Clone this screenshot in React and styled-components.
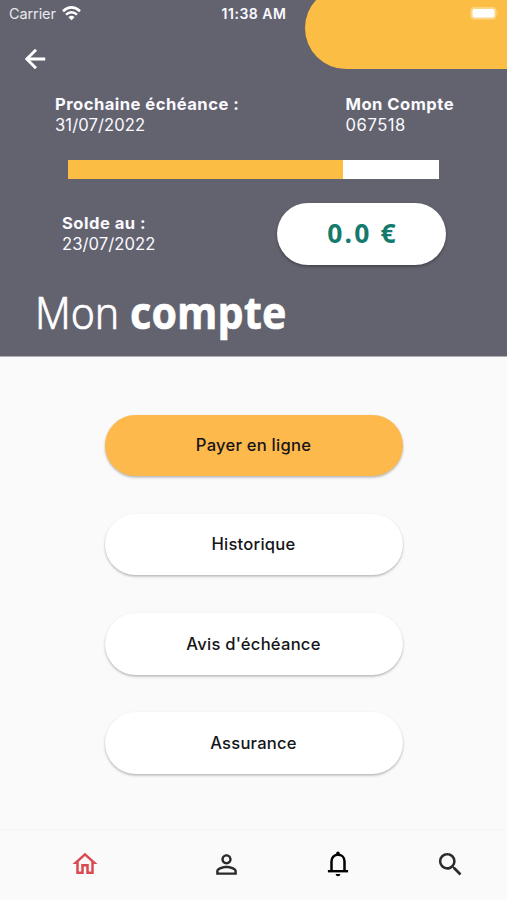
import styled, { createGlobalStyle } from 'styled-components';
import {
  MdArrowBack,
  MdOutlineHome,
  MdPersonOutline,
  MdSearch,
} from 'react-icons/md';

const GlobalStyle = createGlobalStyle`
  * {
    box-sizing: border-box;
  }
  body {
    margin: 0;
    background-color: #fafafa;
    font-family: Inter, 'Liberation Sans', sans-serif;
  }
  button {
    padding: 0;
    border: none;
    font-family: inherit;
    cursor: pointer;
  }
`;

const StyledScreen = styled.div`
  display: flex;
  flex-direction: column;
  width: 507px;
  height: 900px;
  overflow: hidden;
`;

const StyledHeader = styled.header`
  position: relative;
  display: flex;
  flex-direction: column;
  height: 357px;
  color: #fbfaff;
  background-color: #63636f;
  border-bottom: 1px solid #b0b0b6;
  overflow: hidden;
`;

const StyledBlob = styled.div`
  position: absolute;
  top: -13px;
  right: -60px;
  width: 262.5px;
  height: 82px;
  border-radius: 41px;
  background-color: #fbbd43;
`;

const StyledStatusBar = styled.div`
  position: relative;
  display: grid;
  grid-template-columns: 1fr auto 1fr;
  align-items: center;
  height: 27px;
  padding: 0 8px 0 9px;
  font-size: 14.5px;
`;

const StyledCarrier = styled.div`
  display: flex;
  align-items: center;
  gap: 6px;
  color: #e9e8ee;
  letter-spacing: -0.1px;
`;

const StyledTime = styled.div`
  font-weight: 600;
  font-size: 14px;
  letter-spacing: 0.5px;
`;

const StyledBattery = styled.svg`
  justify-self: end;
`;

const StyledBackButton = styled.button`
  display: flex;
  align-items: center;
  width: 32px;
  height: 32px;
  margin: 16px 0 0 20px;
  color: #fff;
  background: none;
  path:last-child {
    stroke: currentColor;
    stroke-width: 0.4px;
    stroke-linejoin: round;
  }
`;

const StyledInfoRow = styled.div`
  display: flex;
  justify-content: space-between;
  margin: 18.5px 53px 0 55px;
`;

const StyledInfo = styled.div`
  font-size: 16.6px;
  line-height: 21px;
  letter-spacing: ${({ $spacing }) => $spacing || '0.08px'};
  white-space: nowrap;
  strong {
    display: block;
    font-weight: 700;
    letter-spacing: 0.47px;
  }
`;

const StyledProgress = styled.div`
  flex: none;
  width: 371px;
  height: 18.5px;
  margin: 24.5px 0 0 68px;
  background-color: #fff;
`;

const StyledProgressValue = styled.div`
  height: 100%;
  background-color: #fbbd43;
`;

const StyledBalanceRow = styled.div`
  display: flex;
  align-items: center;
  justify-content: space-between;
  margin: 24.5px 61px 0 62px;
`;

const StyledBalance = styled.div`
  display: flex;
  align-items: center;
  justify-content: center;
  width: 169px;
  height: 61.5px;
  padding: 0 0 2px 2px;
  border-radius: 31px;
  color: #137a6c;
  background-color: #fff;
  box-shadow: 0 1.5px 3px rgba(0, 0, 0, 0.35);
  font-family: 'Noto Sans', sans-serif;
  font-size: 26.5px;
  font-weight: 700;
  letter-spacing: 2.1px;
`;

const StyledTitle = styled.h1`
  margin: 17px 0 0 34.5px;
  color: #fff;
  font-family: 'Noto Sans', sans-serif;
  font-size: 44.5px;
  font-weight: 300;
  line-height: 60px;
  white-space: nowrap;
  transform: scaleX(0.92);
  transform-origin: left;
  -webkit-text-stroke: 0.7px #fff;
  strong {
    font-weight: 700;
    letter-spacing: 0.4px;
  }
`;

const StyledActions = styled.main`
  display: flex;
  flex: 1;
  flex-direction: column;
  align-items: center;
  gap: 37.7px;
  padding-top: 57.7px;
`;

const StyledActionButton = styled.button`
  width: 298px;
  height: 61.5px;
  padding-bottom: 0.5px;
  border-radius: 31px;
  color: #15151a;
  background-color: ${({ $primary }) => ($primary ? '#fdb94c' : '#fff')};
  box-shadow: 0 1.5px 2.5px rgba(0, 0, 0, 0.28);
  font-size: 16.6px;
  font-weight: 500;
  letter-spacing: 0.23px;
`;

const StyledNav = styled.nav`
  display: grid;
  grid-template-columns: 170px 112px 112px 112px;
  align-items: center;
  justify-items: center;
  height: 71px;
  padding-bottom: 2px;
  border-top: 1px solid #f5f5f5;
`;

const StyledNavItem = styled.button`
  display: flex;
  color: ${({ $color }) => $color || '#2b2b2b'};
  background: none;
`;

const actions = ['Payer en ligne', 'Historique', "Avis d'échéance", 'Assurance'];

const WifiIcon = () => (
  <svg width="19" height="15" viewBox="0 0 19 15" fill="none" stroke="#fff">
    <path d="M1 5.2Q9.5-2.3 18 5.2" strokeWidth="2.6" />
    <path d="M4 8.6Q9.5 3.9 15 8.6" strokeWidth="2.5" />
    <path d="M6.4 11.2Q9.5 8.5 12.6 11.2L9.5 14.3Z" fill="#fff" stroke="none" />
  </svg>
);

const BatteryIcon = () => (
  <StyledBattery width="30" height="15" viewBox="0 0 30 15">
    <rect x="1.5" y="1" width="26" height="12.5" rx="4" fill="#fdd586" />
    <rect x="3.5" y="3" width="22" height="8.5" rx="2" fill="#fff" />
    <path d="M28.4 5.2q1.6 2 0 4z" fill="#fdd586" />
  </StyledBattery>
);

const BellIcon = () => (
  <svg width="22" height="26" viewBox="0 0 22 26" fill="none" stroke="currentColor">
    <path d="M4.5 20V10.4C4.5 6.5 7.2 3.8 11 3.8s6.5 2.7 6.5 6.6V20" strokeWidth="2.5" />
    <path d="M0.9 20.2h20.2" strokeWidth="2.4" />
    <path d="M9.2 3.4V2.2a1.8 1.8 0 0 1 3.6 0v1.2z" fill="currentColor" stroke="none" />
    <path d="M8.7 23h4.6c0 3-4.6 3-4.6 0z" fill="currentColor" stroke="none" />
  </svg>
);

const Header = ({ progress }) => (
  <StyledHeader>
    <StyledBlob />
    <StyledStatusBar>
      <StyledCarrier>
        Carrier <WifiIcon />
      </StyledCarrier>
      <StyledTime>11:38 AM</StyledTime>
      <BatteryIcon />
    </StyledStatusBar>
    <StyledBackButton aria-label="Retour">
      <MdArrowBack size={30} />
    </StyledBackButton>
    <StyledInfoRow>
      <StyledInfo>
        <strong>Prochaine échéance :</strong>
        31/07/2022
      </StyledInfo>
      <StyledInfo $spacing="0.55px">
        <strong>Mon Compte</strong>
        067518
      </StyledInfo>
    </StyledInfoRow>
    <StyledProgress>
      <StyledProgressValue style={{ width: `${progress}%` }} />
    </StyledProgress>
    <StyledBalanceRow>
      <StyledInfo>
        <strong>Solde au :</strong>
        23/07/2022
      </StyledInfo>
      <StyledBalance>0.0 €</StyledBalance>
    </StyledBalanceRow>
    <StyledTitle>
      Mon <strong>compte</strong>
    </StyledTitle>
  </StyledHeader>
);

const App = () => {
  return (
    <StyledScreen>
      <GlobalStyle />
      <Header progress={74.2} />
      <StyledActions>
        {actions.map((label, index) => (
          <StyledActionButton key={label} $primary={index === 0}>
            {label}
          </StyledActionButton>
        ))}
      </StyledActions>
      <StyledNav>
        <StyledNavItem $color="#d94a52" aria-label="Accueil">
          <MdOutlineHome size={30} />
        </StyledNavItem>
        <StyledNavItem aria-label="Profil">
          <MdPersonOutline size={31} />
        </StyledNavItem>
        <StyledNavItem $color="#000" aria-label="Notifications">
          <BellIcon />
        </StyledNavItem>
        <StyledNavItem aria-label="Recherche">
          <MdSearch size={31} />
        </StyledNavItem>
      </StyledNav>
    </StyledScreen>
  );
};

export default App;
